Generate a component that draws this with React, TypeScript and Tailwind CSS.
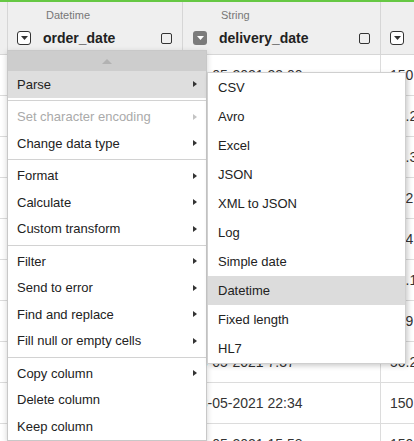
import React from 'react';

type Col = { type: string; name: string; icon: 'outline' | 'filled' };

const columns: Col[] = [
  { type: 'Datetime', name: 'order_date', icon: 'outline' },
  { type: 'String', name: 'delivery_date', icon: 'filled' },
];

// cells hidden behind the open menus are left empty
const rows = [
  ['', '16-05-2021 23:00', '150'],
  ['', '', '30.2'],
  ['', '', '80.3'],
  ['', '', '152'],
  ['', '', '124'],
  ['', '', '20.1'],
  ['', '', '139'],
  ['', '13-05-2021 7:37', '50.2'],
  ['', '13-05-2021 22:34', '150'],
  ['', '12-05-2021 15:58', '150'],
];

type Item = { label: string; sub?: boolean; disabled?: boolean; active?: boolean };

const menuGroups: Item[][] = [
  [{ label: 'Parse', sub: true, active: true }],
  [
    { label: 'Set character encoding', sub: true, disabled: true },
    { label: 'Change data type', sub: true },
  ],
  [
    { label: 'Format', sub: true },
    { label: 'Calculate', sub: true },
    { label: 'Custom transform', sub: true },
  ],
  [
    { label: 'Filter', sub: true },
    { label: 'Send to error', sub: true },
    { label: 'Find and replace', sub: true },
    { label: 'Fill null or empty cells', sub: true },
  ],
  [
    { label: 'Copy column', sub: true },
    { label: 'Delete column' },
    { label: 'Keep column' },
  ],
];

const parseItems = ['CSV', 'Avro', 'Excel', 'JSON', 'XML to JSON', 'Log', 'Simple date', 'Datetime', 'Fixed length', 'HL7'];

const DropIcon = ({ variant }: { variant: 'outline' | 'filled' }) =>
  variant === 'filled' ? (
    <div className="w-[14px] h-[14px] rounded-[3px] bg-[#7b7b7b] flex items-center justify-center shrink-0">
      <svg width="7" height="4" viewBox="0 0 7 4">
        <polygon points="0,0 7,0 3.5,4" fill="#ffffff" />
      </svg>
    </div>
  ) : (
    <div className="w-[14px] h-[14px] rounded-[3px] border-[1.5px] border-[#333] bg-white flex items-center justify-center shrink-0">
      <svg width="7" height="4" viewBox="0 0 7 4">
        <polygon points="0,0 7,0 3.5,4" fill="#333333" />
      </svg>
    </div>
  );

const Checkbox = () => <div className="w-[11px] h-[11px] rounded-[2px] border border-[#333] shrink-0"></div>;

const Arrow = ({ disabled }: { disabled?: boolean }) => (
  <svg width="4" height="6" viewBox="0 0 4 6">
    <polygon points="0,0 4,3 0,6" fill={disabled ? '#c4c4c4' : '#333333'} />
  </svg>
);

const HeaderCell = ({ col, width, pl }: { col: Col; width: string; pl: string }) => (
  <div className={`${width} shrink-0 border-r border-[#d6d6d6] flex flex-col`}>
    <div className="pl-[38px] pt-[7px] text-[11px] leading-[13px] text-[#777]">{col.type}</div>
    <div className={`mt-[7px] h-[18px] flex items-center ${pl} pr-[10px]`}>
      <DropIcon variant={col.icon} />
      <span className="ml-[12px] text-[14px] font-bold text-[#222] leading-[18px]">{col.name}</span>
      <div className="ml-auto">
        <Checkbox />
      </div>
    </div>
  </div>
);

export default function App() {
  return (
    <div className="relative w-[414px] h-[441px] overflow-hidden bg-white" style={{ fontFamily: '"Liberation Sans", Arial, sans-serif' }}>
      {/* Table */}
      <div className="border-t-2 border-[#66c844]">
        <div className="flex h-[53px] bg-[#efefef] border-b border-[#d6d6d6]">
          <div className="w-[8px] shrink-0 border-r border-[#d6d6d6]"></div>
          <HeaderCell col={columns[0]} width="w-[175px]" pl="pl-[9px]" />
          <HeaderCell col={columns[1]} width="w-[198px]" pl="pl-[10px]" />
          <div className="flex-1 flex flex-col">
            <div className="h-[20px]"></div>
            <div className="mt-[7px] h-[18px] flex items-center pl-[9px]">
              <DropIcon variant="outline" />
            </div>
          </div>
        </div>
        {rows.map((r, i) => (
          <div key={i} className="flex h-[41px] border-b border-[#dcdcdc] text-[14px] text-[#333]">
            <div className="w-[8px] shrink-0 border-r border-[#dcdcdc]"></div>
            <div className="w-[175px] shrink-0 border-r border-[#dcdcdc] flex items-center pl-[9px]">{r[0]}</div>
            <div className="w-[198px] shrink-0 border-r border-[#dcdcdc] flex items-center pl-[9px] whitespace-nowrap">{r[1]}</div>
            <div className="flex-1 flex items-center pl-[9px] whitespace-nowrap">{r[2]}</div>
          </div>
        ))}
      </div>

      {/* Column menu */}
      <div className="absolute left-[7px] top-[50px] w-[200px] bg-white border border-[#c8c8c8] shadow-[0_2px_6px_rgba(0,0,0,0.18)] z-10 text-[13px] text-[#222]">
        <div className="h-[20px] bg-[#cdcdcd] flex items-center justify-center">
          <svg width="10" height="5" viewBox="0 0 10 5">
            <polygon points="0,5 10,5 5,0" fill="#b2b2b2" />
          </svg>
        </div>
        {menuGroups.map((group, gi) => (
          <div key={gi}>
            {gi > 0 && <div className="h-px my-[2.5px] bg-[#d2d2d2]"></div>}
            {group.map((item) => (
              <div
                key={item.label}
                className={`h-[26.5px] flex items-center justify-between pl-[9px] pr-[9px] ${item.active ? 'bg-[#dedede]' : ''} ${item.disabled ? 'text-[#aaaaaa]' : ''}`}
              >
                <span>{item.label}</span>
                {item.sub && <Arrow disabled={item.disabled} />}
              </div>
            ))}
          </div>
        ))}
      </div>

      {/* Parse submenu */}
      <div className="absolute left-[207px] top-[72px] w-[199px] bg-white border border-[#cfcfcf] shadow-[2px_2px_5px_rgba(0,0,0,0.2)] z-20 text-[13px] text-[#222]">
        {parseItems.map((label) => (
          <div key={label} className={`h-[29px] flex items-center pl-[10px] ${label === 'Datetime' ? 'bg-[#dcdcdc]' : ''}`}>
            {label}
          </div>
        ))}
      </div>
    </div>
  );
}
